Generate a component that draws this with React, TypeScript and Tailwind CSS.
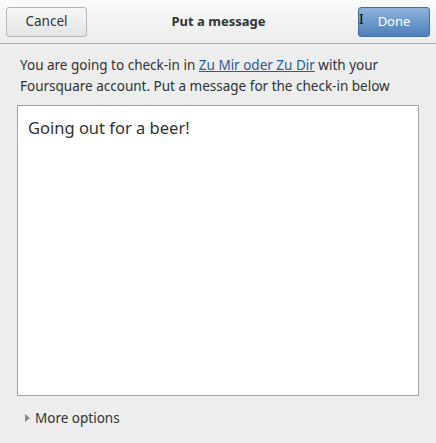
import React from "react";

export default function App() {
  return (
    <div
      className="w-[436px] h-[443px] bg-[#ededed] flex flex-col text-[#2e3436] rounded-t-[6px] overflow-hidden"
      style={{ fontFamily: '"Noto Sans", "Open Sans", sans-serif' }}
    >
      {/* Header bar */}
      <div className="h-[44px] shrink-0 flex items-center px-[6px] bg-gradient-to-b from-[#fbfbfb] to-[#ececec] border-b border-[#a9a9a9]">
        <button className="w-[81px] h-[30px] rounded-[3px] border border-[#b6b6b3] bg-gradient-to-b from-[#f7f7f7] to-[#e4e4e4] text-[13.5px] text-[#2e3436]">
          Cancel
        </button>
        <div className="flex-1 text-center text-[13px] font-bold text-[#2e3436] pr-[8px]">
          Put a message
        </div>
        <button className="relative w-[72px] h-[30px] rounded-[3px] border border-[#3d6ea3] bg-gradient-to-b from-[#8db3dc] to-[#4f80bb] text-[13px] text-white">
          Done
          <span className="absolute left-[0px] top-[5px] text-[14px] leading-none text-black font-['Liberation_Serif']">
            I
          </span>
        </button>
      </div>

      {/* Message */}
      <p className="px-[20px] pt-[11px] text-[13.5px] leading-[21px] text-[#2e3436]">
        You are going to check-in in{" "}
        <a className="text-[#2a5d94] underline">Zu Mir oder Zu Dir</a> with your
        Foursquare account. Put a message for the check-in below
      </p>

      {/* Text area */}
      <div className="mx-[17px] mt-[8px] h-[291px] w-[402px] bg-white border border-[#a4a4a4] px-[10px] pt-[10px] text-[16.5px] text-[#2e3436]">
        Going out for a beer!
      </div>

      {/* More options */}
      <div className="flex items-center gap-[5px] px-[25px] mt-[12px] text-[13.5px] text-[#2e3436]">
        <svg width="5" height="8" viewBox="0 0 5 8">
          <path d="M0 0 L5 4 L0 8 Z" fill="#8a8a8a" />
        </svg>
        More options
      </div>
    </div>
  );
}
